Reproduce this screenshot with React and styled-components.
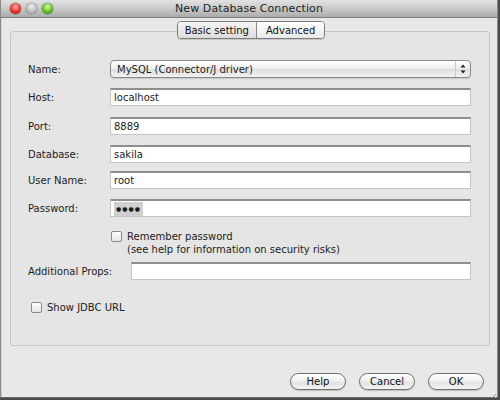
import styled, { createGlobalStyle } from "styled-components";

const GlobalStyle = createGlobalStyle`
    html, body {
        margin: 0;
        padding: 0;
        background: #4b4b4b;
        font-family: "DejaVu Sans", "Liberation Sans", sans-serif;
        color: #1c1c1c;
    }
`;

export default function App() {
    return (
        <>
            <GlobalStyle />
            <Window>
                <TitleBar>
                    <Lights>
                        <Light color="red" />
                        <Light color="gray" />
                        <Light color="green" />
                    </Lights>
                    <Title>New Database Connection</Title>
                </TitleBar>

                <Body>
                    <Tabs>
                        <Tab active>Basic setting</Tab>
                        <Tab>Advanced</Tab>
                    </Tabs>

                    <Panel>
                        <Row>
                            <Label>Name:</Label>
                            <Select>
                                <span>MySQL (Connector/J driver)</span>
                                <Arrows>
                                    <svg width="6" height="10" viewBox="0 0 6 10">
                                        <path d="M3 0.5 L5.5 3.5 H0.5 Z" fill="#222" />
                                        <path d="M3 9.5 L5.5 6.5 H0.5 Z" fill="#222" />
                                    </svg>
                                </Arrows>
                            </Select>
                        </Row>
                        <Row gap={10}>
                            <Label>Host:</Label>
                            <Input>localhost</Input>
                        </Row>
                        <Row gap={11}>
                            <Label>Port:</Label>
                            <Input>8889</Input>
                        </Row>
                        <Row gap={10}>
                            <Label>Database:</Label>
                            <Input>sakila</Input>
                        </Row>
                        <Row gap={8}>
                            <Label>User Name:</Label>
                            <Input>root</Input>
                        </Row>
                        <Row gap={10}>
                            <Label>Password:</Label>
                            <Input>
                                <Dots>●●●●</Dots>
                            </Input>
                        </Row>

                        <CheckRow indent={83} gap={13}>
                            <Checkbox />
                            <CheckText>
                                Remember password
                                <br />
                                (see help for information on security risks)
                            </CheckText>
                        </CheckRow>

                        <Row gap={6}>
                            <Label wide>Additional Props:</Label>
                            <Input />
                        </Row>

                        <CheckRow indent={3} gap={21}>
                            <Checkbox />
                            <CheckText>Show JDBC URL</CheckText>
                        </CheckRow>
                    </Panel>

                    <Footer>
                        <Button>Help</Button>
                        <Button>Cancel</Button>
                        <Button>OK</Button>
                    </Footer>
                </Body>

                <Grip>
                    <svg width="10" height="10" viewBox="0 0 10 10">
                        <path d="M9 2 L2 9 M9 5 L5 9 M9 8 L8 9" stroke="#9a9a9a" strokeWidth="1" />
                    </svg>
                </Grip>
            </Window>
        </>
    );
}

const Window = styled.div`
    position: relative;
    box-sizing: border-box;
    width: 498px;
    height: 398px;
    display: flex;
    flex-direction: column;
    background: #e8e8e8;
    border-left: 1px solid #8a8a8a;
    border-right: 1px solid #8a8a8a;
    border-bottom: 1px solid #6a6a6a;
    box-shadow: inset 1px 0 0 #cfcfcf;
`;

const TitleBar = styled.div`
    position: relative;
    height: 17px;
    flex: none;
    display: flex;
    align-items: center;
    justify-content: center;
    background: linear-gradient(#e2e2e2, #cacaca 50%, #ababab);
    border-bottom: 1px solid #7e7e7e;
`;

const Lights = styled.div`
    position: absolute;
    left: 9px;
    top: 3px;
    display: flex;
    gap: 5px;
`;

const lightColors = {
    red: "radial-gradient(circle at 50% 35%, #ffb0a8 0%, #e8322a 55%, #a8100c 100%)",
    gray: "radial-gradient(circle at 50% 35%, #f0f0f0 0%, #bcbcbc 55%, #8e8e8e 100%)",
    green: "radial-gradient(circle at 50% 35%, #d8f8b0 0%, #62c028 55%, #2e7a10 100%)",
};

const Light = styled.div`
    width: 11px;
    height: 11px;
    border-radius: 50%;
    background: ${(p) => lightColors[p.color]};
    box-shadow: 0 0 0 0.5px rgba(0, 0, 0, 0.45);
`;

const Title = styled.div`
    font-size: 11px;
    color: #222;
    letter-spacing: 0.1px;
`;

const Body = styled.div`
    flex: 1;
    display: flex;
    flex-direction: column;
    padding: 3px 7px 0 9px;
`;

const Tabs = styled.div`
    position: relative;
    z-index: 1;
    display: flex;
    align-self: center;
    margin-left: 2px;
    height: 16px;
    border: 1px solid #7c7c7c;
    border-radius: 4px;
    overflow: hidden;
    box-shadow: 0 1px 1px rgba(0, 0, 0, 0.15);
`;

const Tab = styled.div`
    display: flex;
    align-items: center;
    padding: 0 ${(p) => (p.active ? "7px" : "9px")};
    font-size: 10px;
    color: #111;
    background: ${(p) =>
        p.active ? "linear-gradient(#f4f4f4, #dcdcdc)" : "linear-gradient(#ffffff, #e9e9e9)"};
    & + & {
        border-left: 1px solid #8a8a8a;
    }
`;

const Panel = styled.div`
    margin-top: -8px;
    height: 315px;
    box-sizing: border-box;
    padding: 28px 18px 0 17px;
    border: 1px solid #c6c6c6;
    border-radius: 3px;
    background: #e5e5e5;
    display: flex;
    flex-direction: column;
`;

const Row = styled.div`
    display: flex;
    align-items: center;
    margin-top: ${(p) => p.gap || 0}px;
`;

const Label = styled.div`
    width: ${(p) => (p.wide ? 103 : 82)}px;
    flex: none;
    font-size: 10px;
`;

const Input = styled.div`
    flex: 1;
    height: 18px;
    box-sizing: border-box;
    display: flex;
    align-items: center;
    padding-left: 3px;
    background: #fff;
    border: 1px solid #c4c4c4;
    border-top: 2px solid #8e8e8e;
    font-size: 10px;
`;

const Dots = styled.span`
    background: #cfcfcf;
    padding: 1px 2px;
    font-size: 6px;
    letter-spacing: 1px;
    line-height: 12px;
`;

const Select = styled.div`
    flex: 1;
    height: 18px;
    box-sizing: border-box;
    display: flex;
    align-items: center;
    justify-content: space-between;
    padding-left: 6px;
    border: 1px solid #8a8a8a;
    border-radius: 4px;
    background: linear-gradient(#ffffff, #ececec 50%, #dedede 51%, #f2f2f2);
    box-shadow: 0 1px 1px rgba(0, 0, 0, 0.12);
    font-size: 10px;
`;

const Arrows = styled.div`
    width: 14px;
    height: 100%;
    display: flex;
    align-items: center;
    justify-content: center;
    border-left: 1px solid #c8c8c8;
`;

const CheckRow = styled.div`
    display: flex;
    align-items: flex-start;
    gap: 5px;
    margin-top: ${(p) => p.gap}px;
    margin-left: ${(p) => p.indent}px;
`;

const Checkbox = styled.div`
    width: 11px;
    height: 11px;
    margin-top: 1px;
    flex: none;
    box-sizing: border-box;
    border: 1px solid #8a8a8a;
    border-radius: 2px;
    background: linear-gradient(#ffffff, #e4e4e4);
`;

const CheckText = styled.div`
    font-size: 10px;
    line-height: 13px;
`;

const Footer = styled.div`
    display: flex;
    justify-content: flex-end;
    gap: 13px;
    margin-top: 27px;
    padding-right: 6px;
`;

const Button = styled.div`
    width: 56px;
    height: 17px;
    box-sizing: border-box;
    display: flex;
    align-items: center;
    justify-content: center;
    border: 1px solid #6e6e6e;
    border-radius: 9px;
    background: linear-gradient(#ffffff, #eeeeee 50%, #e0e0e0 51%, #f4f4f4);
    box-shadow: 0 1px 1px rgba(0, 0, 0, 0.18);
    font-size: 10px;
    color: #111;
`;

const Grip = styled.div`
    position: absolute;
    right: 0;
    bottom: 0;
    width: 10px;
    height: 10px;
`;
